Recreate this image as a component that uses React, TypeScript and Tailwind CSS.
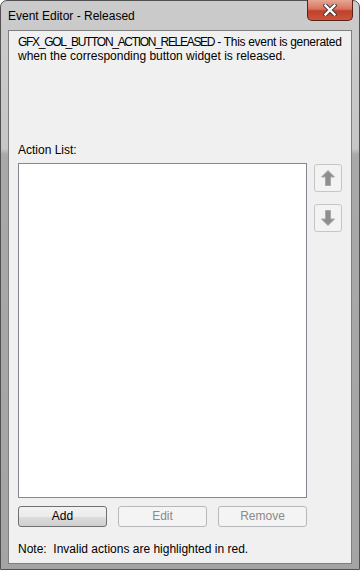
import React from 'react';

const font = { fontFamily: '"Liberation Sans", Arial, sans-serif' };

const Arrow: React.FC<{ down?: boolean }> = ({ down }) => (
  <svg width="14" height="16" viewBox="0 0 14 16" className={down ? 'rotate-180' : ''}>
    <polygon points="7,0.5 13.5,7 9.5,7 9.5,15.5 4.5,15.5 4.5,7 0.5,7" fill="#8e8e8e" stroke="#a8a8a8" strokeWidth="1" />
  </svg>
);

const WinButton: React.FC<{ label: string; disabled?: boolean }> = ({ label, disabled }) => (
  <button
    disabled={disabled}
    className={
      disabled
        ? 'w-[89px] h-[21px] rounded-[3px] border border-[#b5b9bc] bg-[#f4f4f4] text-[#8a8a8a] text-[12px] leading-[19px]'
        : 'w-[89px] h-[21px] rounded-[3px] border border-[#707070] bg-[linear-gradient(to_bottom,#f2f2f2_0%,#ebebeb_50%,#dddddd_51%,#cfcfcf_100%)] text-black text-[12px] leading-[19px]'
    }
  >
    {label}
  </button>
);

export default function App() {
  return (
    <div
      style={font}
      className="w-[360px] h-[570px] rounded-t-[7px] border border-[#515151] bg-[linear-gradient(to_bottom,#cbcbcb_0%,#c6c6c6_26%,#a9a9a9_27%,#a4a4a4_100%)] flex flex-col px-[7px] pb-[5px] select-none"
    >
      {/* Title bar */}
      <div className="relative h-[29px] flex items-center shrink-0">
        <span className="text-[12px] text-black">Event Editor - Released</span>
        <div className="absolute right-[-1px] top-[-1px] w-[46px] h-[21px] rounded-b-[5px] border border-t-0 border-[#5a2118] bg-[linear-gradient(to_bottom,#e6a694_0%,#d9735c_45%,#c2402a_55%,#c9563c_100%)] flex items-center justify-center">
          <svg width="14" height="12" viewBox="0 0 14 12">
            <path d="M2.5 1.5 L11.5 10.5 M11.5 1.5 L2.5 10.5" stroke="#3a3a3a" strokeWidth="4.2" strokeLinecap="square" />
            <path d="M2.5 1.5 L11.5 10.5 M11.5 1.5 L2.5 10.5" stroke="#ffffff" strokeWidth="2.4" strokeLinecap="square" />
          </svg>
        </div>
      </div>

      {/* Client area */}
      <div className="flex-1 border border-[#7f7f7f] bg-[#f0f0f0] flex flex-col pl-[9px] pr-[9px] pt-[4px] text-[12px] text-black">
        <p className="leading-[14px] whitespace-nowrap">
          <span className="tracking-[-1.3px]">GFX_GOL_BUTTON_ACTION_RELEASED</span>
          <span className="tracking-[-0.3px]"> - This event is generated</span>
          <br />
          when the corresponding button widget is released.
        </p>

        <div className="mt-[80px] leading-[14px]">Action List:</div>

        <div className="mt-[6px] flex gap-[7px]">
          <div className="w-[290px] h-[335px] bg-white border border-[#828790]" />
          <div className="flex flex-col gap-[12px] pt-[1px]">
            <button className="w-[28px] h-[28px] rounded-[3px] border border-[#c6c6c6] bg-[#f3f3f3] flex items-center justify-center">
              <Arrow />
            </button>
            <button className="w-[28px] h-[28px] rounded-[3px] border border-[#c6c6c6] bg-[#f3f3f3] flex items-center justify-center">
              <Arrow down />
            </button>
          </div>
        </div>

        <div className="mt-[8px] flex gap-[11px]">
          <WinButton label="Add" />
          <WinButton label="Edit" disabled />
          <WinButton label="Remove" disabled />
        </div>

        <div className="mt-[15px] leading-[14px]">Note:&nbsp; Invalid actions are highlighted in red.</div>
      </div>
    </div>
  );
}
